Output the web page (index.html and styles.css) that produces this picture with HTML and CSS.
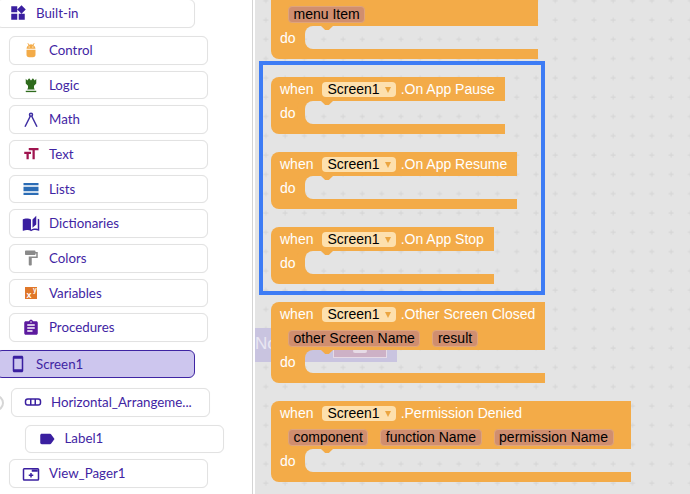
FILE: index.html
```html
<!DOCTYPE html>
<html lang="en">
<head>
    <meta charset="UTF-8">
    <title>Blocks Editor</title>
    <link rel="stylesheet" href="styles.css">
</head>
<body>
    <div class="app">
        <div class="sidebar">
            <div class="row row-builtin">
                <svg class="icon icon-ink" viewBox="0 0 24 24"><path d="M13 13v8h8v-8h-8zM3 21h8v-8H3v8zM3 3v8h8V3H3zm13.66-1.31L11 7.34 16.66 13l5.66-5.66-5.66-5.65z"/></svg>
                <span>Built-in</span>
            </div>
            <div class="row row-first">
                <svg class="icon icon-control" viewBox="0 0 24 24"><path d="M8 2.500l1.800 2.400a6 6 0 0 1 4.400 0L16 2.500l.8.5-1.500 2.500A6 6 0 0 1 18 10.400H6A6 6 0 0 1 8.700 5.500L7.200 3z"/><path d="M6 11.600h12V18a3.500 3.500 0 0 1-3.500 3.500h-5A3.500 3.500 0 0 1 6 18z"/><circle class="control-eye" cx="9.500" cy="8" r="1"/><circle class="control-eye" cx="14.500" cy="8" r="1"/></svg>
                <span>Control</span>
            </div>
            <div class="row">
                <svg class="icon icon-logic" viewBox="0 0 24 24"><path d="M5 3.500l2 2.500 2.500-3L12 6l2.500-3L17 6l2-2.500V10l-3 3v3l1 2H7l1-2v-3l-3-3z"/><path d="M5 19.700h14v1.800H5z"/></svg>
                <span>Logic</span>
            </div>
            <div class="row">
                <svg class="icon icon-math" viewBox="0 0 24 24"><circle cx="12" cy="5" r="2"/><path d="M11 7L4 21M13 7l7 14"/></svg>
                <span>Math</span>
            </div>
            <div class="row">
                <svg class="icon icon-text" viewBox="0 0 24 24"><path d="M9 4v3h5v12h3V7h5V4H9zm-6 8h3v7h3v-7h3V9H3v3z"/></svg>
                <span>Text</span>
            </div>
            <div class="row">
                <svg class="icon icon-lists" viewBox="0 0 24 24"><path d="M2 4h20v3H2zM2 9h20v6H2zM2 17h20v3H2z"/></svg>
                <span>Lists</span>
            </div>
            <div class="row">
                <svg class="icon icon-ink" viewBox="0 0 24 24"><path d="M19 1l-5 5v11l5-4.500V1zM1 6v14.650c0 .25.25.5.5.5.1 0 .15-.05.25-.05C3.100 20.450 5.050 20 6.500 20c1.950 0 4.050.4 5.500 1.500V6c-1.450-1.100-3.550-1.500-5.500-1.500S2.450 4.900 1 6zm22 13.500V6c-.6-.45-1.250-.75-2-1v13.500c-1.100-.35-2.300-.5-3.500-.5-1.700 0-4.150.65-5.500 1.500v2c1.350-.85 3.800-1.500 5.500-1.500 1.650 0 3.350.3 4.750 1.050.1.05.15.05.25.05.25 0 .5-.25.5-.5v-1.100c-.4-.3-.85-.5-1.500-.5z"/></svg>
                <span>Dictionaries</span>
            </div>
            <div class="row">
                <svg class="icon icon-colors" viewBox="0 0 24 24"><path d="M18 4V3c0-.55-.45-1-1-1H5c-.55 0-1 .45-1 1v4c0 .55.45 1 1 1h12c.55 0 1-.45 1-1V6h1v4H9v11c0 .55.45 1 1 1h2c.55 0 1-.45 1-1v-9h8V4h-3z"/></svg>
                <span>Colors</span>
            </div>
            <div class="row">
                <svg class="icon" viewBox="0 0 24 24"><rect class="var-box" x="4" y="4" width="16" height="16"/><text class="var-x" x="6" y="18">x</text><text class="var-y" x="14.500" y="11">y</text></svg>
                <span>Variables</span>
            </div>
            <div class="row">
                <svg class="icon icon-procedures" viewBox="0 0 24 24"><path d="M19 3h-4.180C14.400 1.840 13.300 1 12 1c-1.300 0-2.400.84-2.820 2H5c-1.100 0-2 .9-2 2v14c0 1.100.9 2 2 2h14c1.100 0 2-.9 2-2V5c0-1.100-.9-2-2-2zm-7 0c.55 0 1 .45 1 1s-.45 1-1 1-1-.45-1-1 .45-1 1-1zm2 14H7v-2h7v2zm3-4H7v-2h10v2zm0-4H7V7h10v2z"/></svg>
                <span>Procedures</span>
            </div>
            <div class="row row-screen">
                <svg class="icon icon-ink" viewBox="0 0 24 24"><path d="M17 1.010L7 1c-1.100 0-2 .9-2 2v18c0 1.100.9 2 2 2h10c1.100 0 2-.9 2-2V3c0-1.100-.9-1.990-2-1.990zM17 19H7V5h10v14z"/></svg>
                <span>Screen1</span>
            </div>
            <div class="row row-arrangement">
                <svg class="icon icon-outline" viewBox="0 0 24 24"><rect x="2" y="8" width="20" height="8" rx="3"/><path d="M9 8v8M15 8v8"/></svg>
                <span>Horizontal_Arrangeme...</span>
            </div>
            <div class="row row-label">
                <svg class="icon icon-ink" viewBox="0 0 24 24"><path d="M17.630 5.840C17.270 5.330 16.670 5 16 5L5 5.010C3.900 5.010 3 5.900 3 7v10c0 1.100.9 1.990 2 1.990L16 19c.67 0 1.270-.33 1.630-.84L22 12l-4.370-6.160z"/></svg>
                <span>Label1</span>
            </div>
            <div class="row row-pager">
                <svg class="icon icon-outline" viewBox="0 0 24 24"><rect x="2" y="5" width="20" height="15" rx="1"/><path class="pager-tab" d="M13 6h8v3h-8z"/><path d="M12 10.500v6M9 13.500h6"/></svg>
                <span>View_Pager1</span>
            </div>
        </div>

        <div class="canvas">
            <svg class="grid" width="100%" height="100%">
                <defs>
                    <pattern id="gridCross" x="7.800" y="-2.300" width="19.300" height="19.300" patternUnits="userSpaceOnUse">
                        <path d="M0.500 3h5M3 0.500v5"/>
                    </pattern>
                </defs>
                <rect width="100%" height="100%" fill="url(#gridCross)"/>
            </svg>

            <!-- leftover of a dragged component, sits behind the blocks -->
            <div class="ghost">
                <span class="ghost-text">No</span>
                <div class="ghost-card"><div class="ghost-chip"></div></div>
            </div>

            <div class="frame"></div>

            <div class="block block-menu">
                <div class="head">
                    <div class="head-row head-pills"><span class="pill">menu Item</span></div>
                </div>
                <div class="do-row"><span class="do">do</span><div class="mouth"></div></div>
                <div class="foot"></div>
            </div>

            <div class="block block-pause">
                <div class="head">
                    <div class="head-row">
                        <span class="when">when</span>
                        <span class="dropdown">Screen1<i class="arrow"></i></span>
                        <span>.On App Pause</span>
                    </div>
                </div>
                <div class="do-row"><span class="do">do</span><div class="mouth"></div></div>
                <div class="foot"></div>
            </div>

            <div class="block block-resume">
                <div class="head">
                    <div class="head-row">
                        <span class="when">when</span>
                        <span class="dropdown">Screen1<i class="arrow"></i></span>
                        <span>.On App Resume</span>
                    </div>
                </div>
                <div class="do-row"><span class="do">do</span><div class="mouth"></div></div>
                <div class="foot"></div>
            </div>

            <div class="block block-stop">
                <div class="head">
                    <div class="head-row">
                        <span class="when">when</span>
                        <span class="dropdown">Screen1<i class="arrow"></i></span>
                        <span>.On App Stop</span>
                    </div>
                </div>
                <div class="do-row"><span class="do">do</span><div class="mouth"></div></div>
                <div class="foot"></div>
            </div>

            <div class="block block-closed">
                <div class="head">
                    <div class="head-row">
                        <span class="when">when</span>
                        <span class="dropdown">Screen1<i class="arrow"></i></span>
                        <span>.Other Screen Closed</span>
                    </div>
                    <div class="head-row head-pills">
                        <span class="pill">other Screen Name</span>
                        <span class="pill">result</span>
                    </div>
                </div>
                <div class="do-row"><span class="do">do</span><div class="mouth"></div></div>
                <div class="foot"></div>
            </div>

            <div class="block block-denied">
                <div class="head">
                    <div class="head-row">
                        <span class="when">when</span>
                        <span class="dropdown">Screen1<i class="arrow"></i></span>
                        <span>.Permission Denied</span>
                    </div>
                    <div class="head-row head-pills">
                        <span class="pill">component</span>
                        <span class="pill">function Name</span>
                        <span class="pill">permission Name</span>
                    </div>
                </div>
                <div class="do-row"><span class="do">do</span><div class="mouth"></div></div>
                <div class="foot"></div>
            </div>
        </div>
    </div>
</body>
</html>
```

FILE: styles.css
```css
body {
    margin: 0;
    overflow: hidden;
    background: #fff;
}
.app {
    display: flex;
    height: 494px;
}

/* sidebar */
.sidebar {
    box-sizing: border-box;
    flex: none;
    width: 253px;
    margin-right: 2px;
    border-right: 1px solid #d4d4d4;
    display: flex;
    flex-direction: column;
    gap: 6px;
    font-family: Lato, sans-serif;
    font-size: 13.300px;
    color: #3f25a3;
    overflow: hidden;
}
.row {
    box-sizing: border-box;
    flex: none;
    display: flex;
    align-items: center;
    gap: 9px;
    width: 199px;
    height: 28.700px;
    margin-left: 9px;
    padding-left: 12px;
    background: #fff;
    border: 1px solid #e2e2e2;
    border-radius: 6px;
    box-shadow: 0 0 1px #eee;
}
.row span {
    margin-top: -1px;
}
.row-builtin {
    margin-top: -1px;
    margin-left: -4px;
}
.row-first {
    margin-top: 2.300px;
}
.row-screen {
    height: 27.700px;
    margin-top: 2px;
    margin-left: -4px;
    background: #cdc6ee;
    border-color: #3f25a3;
}
.row-arrangement {
    position: relative;
    margin-top: 4px;
    margin-left: 11px;
}
/* tree toggle, cut off by the window edge */
.row-arrangement::before {
    content: "";
    position: absolute;
    left: -24px;
    top: 6px;
    width: 12px;
    height: 12px;
    border: 2px solid #d6d6d6;
    border-radius: 50%;
}
.row-label {
    margin-top: 2px;
    margin-left: 24.500px;
}
.row-pager {
    margin-top: 0;
}
.icon {
    flex: none;
    width: 18px;
    height: 18px;
}
.icon-ink { fill: #3a1fa0; }
.icon-control { fill: #f3ab48; }
.control-eye { fill: #fbe3bd; }
.icon-logic { fill: #2f6b1d; }
.icon-math { fill: none; stroke: #3f2fa3; stroke-width: 2; }
.icon-text { fill: #a0144f; }
.icon-lists { fill: #2b6cb5; }
.icon-colors { fill: #8a8a8a; }
.icon-procedures { fill: #5c1a9e; }
.icon-outline { fill: none; stroke: #3a1fa0; stroke-width: 2; }
.pager-tab { fill: #3a1fa0; stroke: none; }
.var-box { fill: #e0782a; }
.var-x { fill: #fff; font: bold 12px "Liberation Sans", sans-serif; }
.var-y { fill: #fff; font: bold 9px "Liberation Sans", sans-serif; }

/* workspace */
.canvas {
    position: relative;
    flex: 1;
    background: #e4e4e4;
    overflow: hidden;
    font-family: "Liberation Sans", sans-serif;
    font-size: 14px;
    color: #fff;
}
.grid {
    position: absolute;
    left: 0;
    top: 0;
}
.grid path {
    fill: none;
    stroke: #d6d6d6;
    stroke-width: 1;
}
.ghost {
    position: absolute;
    left: 0;
    top: 328px;
    width: 142px;
    height: 34px;
    background: #c9c4e0;
}
.ghost-text {
    position: absolute;
    left: 0;
    top: 6px;
    font-size: 17px;
    color: #e9e7f2;
}
.ghost-card {
    position: absolute;
    left: 78px;
    top: 4px;
    width: 52px;
    height: 24px;
    background: #cdb1c6;
    border: 1px solid #e6dbe6;
}
.ghost-chip {
    width: 14px;
    height: 4px;
    margin: 16px 0 0 19px;
    background: #e6dbe6;
    border-radius: 2px;
}
.frame {
    position: absolute;
    left: 4px;
    top: 61px;
    box-sizing: border-box;
    width: 286px;
    height: 234px;
    border: 4px solid #3d7cf5;
}

/* blocks */
.block {
    position: absolute;
    left: 16px;
}
.block-menu { top: -22px; width: 267px; }
.block-pause { top: 77px; width: 234px; }
.block-resume { top: 152px; width: 246px; }
.block-stop { top: 227px; width: 223px; }
.block-closed { top: 302px; width: 274px; }
.block-denied { top: 401px; width: 360px; }

.head {
    background: #f3ab48;
    border-radius: 8px 0 0 0;
}
.block-menu .head {
    padding-top: 24px;
}
.head-row {
    display: flex;
    align-items: center;
    height: 24px;
    padding-left: 9px;
    white-space: nowrap;
}
.head-pills {
    gap: 12px;
    padding-left: 17px;
    color: #000;
}
.when {
    margin-right: 9px;
}
.dropdown {
    display: flex;
    align-items: center;
    height: 15px;
    margin-right: 5px;
    padding: 0 5px;
    background: #fde0ae;
    border-radius: 4px;
    color: #000;
}
.arrow {
    width: 0;
    height: 0;
    margin: 1px 0 0 5px;
    border-left: 3.500px solid transparent;
    border-right: 3.500px solid transparent;
    border-top: 6px solid #eba540;
}
.pill {
    box-sizing: border-box;
    height: 17px;
    line-height: 15px;
    margin-top: 1px;
    padding: 0 4.500px;
    background: #d08e6f;
    border: 1px solid #dfa47c;
    border-radius: 4px;
}
.do-row {
    display: flex;
    height: 23px;
    overflow: hidden;
}
.do {
    box-sizing: border-box;
    flex: none;
    width: 34px;
    padding-left: 9px;
    line-height: 25px;
    background: #f3ab48;
}
/* see-through opening of the statement input, the shadow fills its rounded corners */
.mouth {
    position: relative;
    flex: 1;
    border-radius: 8px 0 0 8px;
    box-shadow: 0 0 0 8px #f3ab48;
}
.mouth::before {
    content: "";
    position: absolute;
    left: 16px;
    top: 0;
    width: 12px;
    height: 4px;
    background: #f3ab48;
    clip-path: polygon(0 0, 100% 0, 65% 100%, 35% 100%);
}
.foot {
    height: 10px;
    background: #f3ab48;
    border-radius: 0 0 0 8px;
}
```
